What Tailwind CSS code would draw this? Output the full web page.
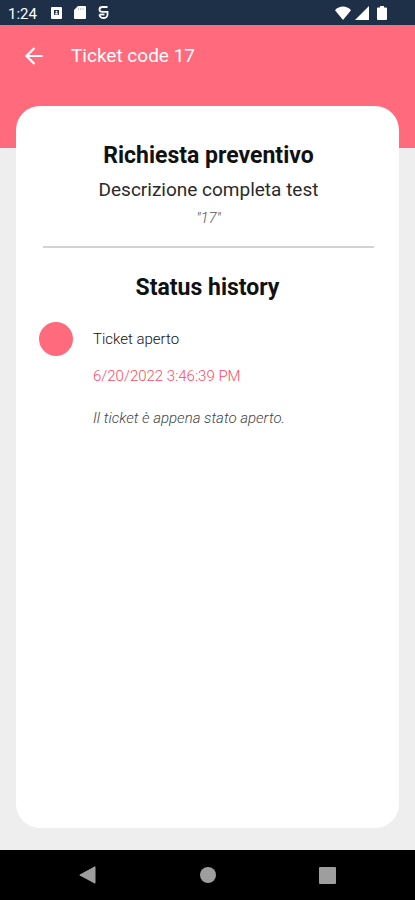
<!DOCTYPE html>
<html lang="it">
<head>
  <meta charset="UTF-8" />
  <meta name="viewport" content="width=device-width, initial-scale=1.0"/>
  <title>Ticket code 17</title>
  <script src="https://cdn.jsdelivr.net/npm/@tailwindcss/browser@4"></script>
</head>
<body class="bg-[#eeeeee] min-h-screen flex flex-col font-['Roboto',sans-serif]">

  <!-- status bar -->
  <div class="h-[25px] shrink-0 bg-[#1d3048] text-white flex items-center justify-between pl-2 pr-7">
    <div class="flex items-center">
      <span class="text-[15px] leading-5 w-[43px] pt-[2px]">1:24</span>
      <svg class="w-[11px] h-3 mr-3" viewBox="0 0 11 12" fill="none">
        <rect width="11" height="12" rx="1" fill="#fff"/>
        <rect x="3" y="3" width="5" height="5" fill="#1d3048"/>
        <path d="M3.6 7.4a2 2 0 0 1 3.8 0z" fill="#fff"/>
        <circle cx="5.5" cy="4.8" r="1" fill="#fff"/>
      </svg>
      <svg class="w-3 h-[13px] mr-3" viewBox="0 0 12 13">
        <path d="M4 0h7a1 1 0 0 1 1 1v11a1 1 0 0 1-1 1H1a1 1 0 0 1-1-1V4z" fill="#fff"/>
        <path d="M4.5 2v2M6.7 2v2M9 2v2" stroke="#1d3048" stroke-opacity=".3" stroke-width="1"/>
      </svg>
      <svg class="w-[11px] h-[13px]" viewBox="0 0 11 13" fill="none" stroke="#fff" stroke-width="1.8">
        <path d="M9.500 1H4.500a3 2.400 0 0 0 0 4.800h5v2.700a4 3.500 0 0 1-8 0"/>
        <path d="M1.500 8.500h5"/>
      </svg>
    </div>
    <div class="flex items-center">
      <svg class="w-4 h-[14px] mr-1" viewBox="0 0 16 14" fill="#fff"><path d="M8 14 0 4.200C2.300 1.600 5 .4 8 .4s5.700 1.200 8 3.800z"/></svg>
      <svg class="w-[14px] h-[14px] mr-1" viewBox="0 0 14 14" fill="#fff"><path d="M14 0v14H0z"/></svg>
      <svg class="w-[10px] h-[14px] ml-1" viewBox="0 0 10 14" fill="#fff"><path d="M3 0h4v1.500h2a1 1 0 0 1 1 1V13a1 1 0 0 1-1 1H1a1 1 0 0 1-1-1V2.500a1 1 0 0 1 1-1h2z"/></svg>
    </div>
  </div>

  <header class="h-[123px] shrink-0 bg-[#ff6a7d] text-white">
    <div class="h-[61px] flex items-center gap-7 pl-6">
      <button type="button" aria-label="Back" class="w-[19px] h-5">
        <svg class="w-full h-full" viewBox="0 0 19 20" fill="none" stroke="#fff" stroke-width="2.200"><path d="M18.500 10H2.500M10.500 2l-8 8 8 8"/></svg>
      </button>
      <h1 class="text-[19px] leading-8">Ticket code 17</h1>
    </div>
  </header>

  <main class="grow flex flex-col bg-white rounded-3xl mx-4 -mt-[42px] mb-[22px] px-[23px] pt-8">
    <div class="text-center border-b-2 border-[#d2d2d2] pb-4 ml-1 mr-[2px]">
      <h2 class="text-[23px] leading-9 font-bold text-[#111111]">Richiesta preventivo</h2>
      <p class="text-[19px] leading-8 text-[#2a2a2a]">Descrizione completa test</p>
      <p class="text-[15px] leading-6 italic font-light text-[#555555]">"17"</p>
    </div>
    <h2 class="text-[23px] leading-9 font-bold text-[#111111] text-center mt-[22px]">Status history</h2>
    <ul class="mt-4">
      <li class="flex items-start gap-5">
        <span class="w-[34px] h-[34px] shrink-0 rounded-full bg-[#ff6a7d]"></span>
        <div class="text-[15px] leading-[34px] font-light">
          <p class="text-[#111111]">Ticket aperto</p>
          <p class="text-[#ff4a62] mt-[3px]">6/20/2022 3:46:39 PM</p>
          <p class="text-[#444444] italic mt-2">Il ticket è appena stato aperto.</p>
        </div>
      </li>
    </ul>
  </main>

  <!-- navigation bar -->
  <nav class="h-[50px] shrink-0 bg-black flex items-center justify-between px-[79px]">
    <button type="button" aria-label="Back">
      <svg class="w-[17px] h-[18px]" viewBox="0 0 17 18" fill="#9e9e9e"><path d="M16 .8v16.400L.8 9z" stroke="#9e9e9e" stroke-linejoin="round"/></svg>
    </button>
    <button type="button" aria-label="Home" class="w-4 h-4 rounded-full bg-[#9e9e9e]"></button>
    <button type="button" aria-label="Recents" class="w-[17px] h-[17px] rounded-[1px] bg-[#9e9e9e]"></button>
  </nav>

</body>
</html>
